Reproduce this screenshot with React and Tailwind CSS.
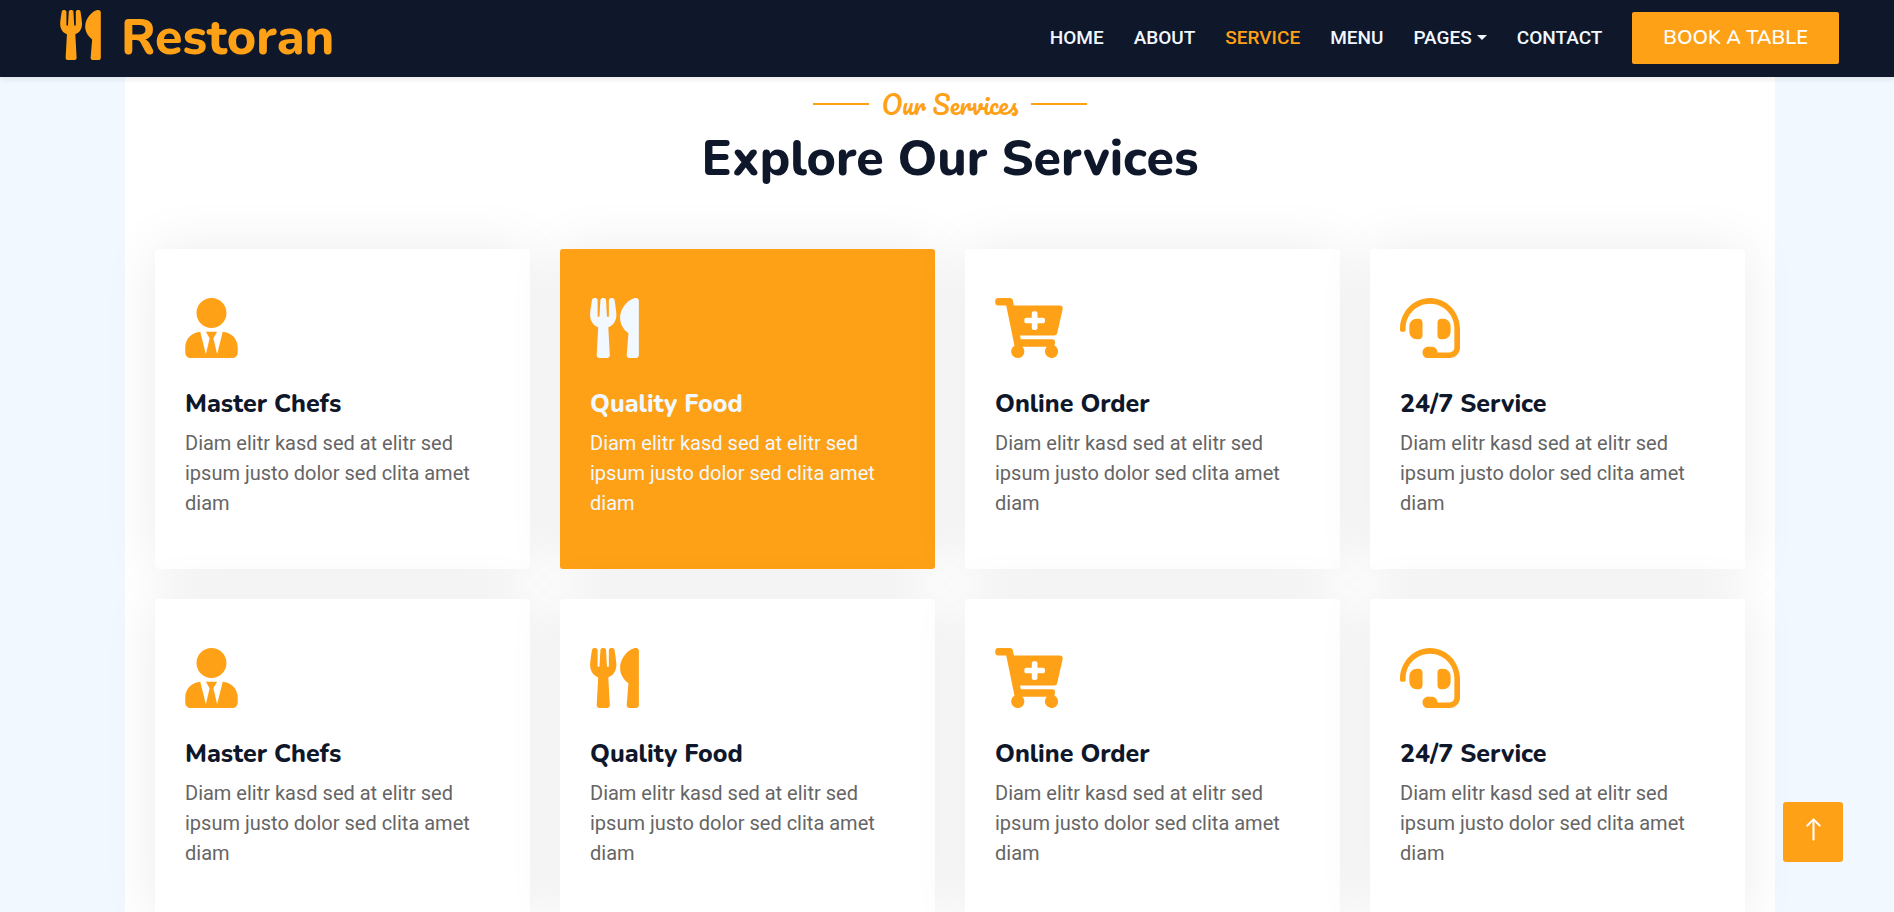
import { FaUserTie, FaUtensils, FaCartPlus, FaHeadset } from "react-icons/fa";
import { BsArrowUp } from "react-icons/bs";

const services = [
  { title: "Master Chefs", Icon: FaUserTie, width: "w-[53px]" },
  { title: "Quality Food", Icon: FaUtensils, width: "w-[49px]" },
  { title: "Online Order", Icon: FaCartPlus, width: "w-[68px]" },
  { title: "24/7 Service", Icon: FaHeadset, width: "w-[60px]" },
];

const cards = [...services, ...services];

const links = ["Home", "About", "Service", "Menu", "Pages", "Contact"];

function Navbar() {
  return (
    <header className="relative z-10 flex h-[77px] shrink-0 items-center justify-between bg-[#0f172b] pr-[55px] pb-[2px] pl-[60px] shadow-[0_3px_5px_rgba(0,0,0,0.075)]">
      <a href="#home" className="flex items-center gap-[20px] text-[#fea116]">
        <FaUtensils className="mb-[6px] h-[50px] w-[41px]" />
        <span className="font-[Nunito,Lato,sans-serif] text-[50px] leading-[60px] font-extrabold">
          Restoran
        </span>
      </a>
      <div className="flex items-center gap-[30px]">
        <nav className="flex items-center gap-[30px] text-[19px] leading-[28px] font-medium uppercase">
          {links.map((label) => (
            <a
              key={label}
              href={"#" + label.toLowerCase()}
              className={
                label === "Service"
                  ? "text-[#fea116]"
                  : "flex items-center gap-[5px] text-[#f1f8ff]"
              }
            >
              {label}
              {label === "Pages" && (
                <span className="border-x-[5px] border-t-[5px] border-x-transparent border-t-[#f1f8ff]" />
              )}
            </a>
          ))}
        </nav>
        <a
          href="#book"
          className="rounded-[2px] bg-[#fea116] px-[31px] py-[11px] font-[Nunito,Lato,sans-serif] text-[20px] leading-[30px] font-semibold text-white uppercase"
        >
          Book A Table
        </a>
      </div>
    </header>
  );
}

function ServiceCard({ title, Icon, width, active }) {
  return (
    <article
      className={
        "relative h-[320px] rounded-[3px] px-[30px] pt-[49px] shadow-[0_0_56px_rgba(0,0,0,0.08)] " +
        (active ? "bg-[#fea116] text-[#f1f8ff]" : "bg-white text-[#666565]")
      }
    >
      <Icon
        className={"h-[60px] " + width + (active ? " text-[#f1f8ff]" : " text-[#fea116]")}
      />
      <h5
        className={
          "mt-[31px] font-[Nunito,Lato,sans-serif] text-[25px] leading-[30px] font-extrabold " +
          (active ? "text-[#f1f8ff]" : "text-[#0f172b]")
        }
      >
        {title}
      </h5>
      <p className="mt-[9px] text-[20px] leading-[30px]">
        Diam elitr kasd sed at elitr sed ipsum justo dolor sed clita amet diam
      </p>
    </article>
  );
}

export default function App() {
  return (
    <div className="flex h-screen flex-col overflow-hidden bg-[#f1f8ff] font-[Roboto,sans-serif]">
      <Navbar />
      <main className="shrink-0 pr-[119px] pl-[125px]">
        <section className="bg-white px-[30px] pt-[12px] pb-[60px]">
          <div className="flex flex-col items-center">
            <div className="flex items-center gap-[13px] text-[#fea116]">
              <span className="h-[2px] w-[56px] bg-[#fea116]" />
              <h5 className="font-[Pacifico,Lato,cursive] text-[25px] leading-[30px] font-normal">
                Our Services
              </h5>
              <span className="h-[2px] w-[56px] bg-[#fea116]" />
            </div>
            <h1 className="mt-[10px] font-[Nunito,Lato,sans-serif] text-[50px] leading-[60px] font-extrabold text-[#0f172b]">
              Explore Our Services
            </h1>
          </div>
          <div className="mt-[60px] grid grid-cols-4 gap-[30px]">
            {cards.map((card, i) => (
              <ServiceCard key={i} {...card} active={i === 1} />
            ))}
          </div>
        </section>
      </main>
      <button
        type="button"
        aria-label="Back to top"
        className="fixed right-[51px] bottom-[50px] z-20 flex size-[60px] items-center justify-center rounded-[3px] bg-[#fea116] pb-[6px] text-white"
      >
        <BsArrowUp className="size-[25px]" strokeWidth="0.3" />
      </button>
    </div>
  );
}
